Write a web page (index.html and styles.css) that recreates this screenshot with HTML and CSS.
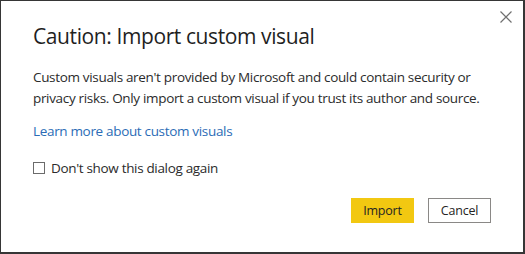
FILE: index.html
```html
<!DOCTYPE html>
<html>
<head>
  <title>Caution: Import custom visual</title>
  <link rel="stylesheet" href="styles.css">
</head>
<body>
  <div class="dialog">
    <button class="close" aria-label="Close">
      <svg width="12" height="12" viewBox="0 0 12 12">
        <path d="M0.5 0.5 L11.5 11.5 M11.5 0.5 L0.5 11.5" stroke="#707070" stroke-width="1.2" fill="none"/>
      </svg>
    </button>
    <h1 class="title">Caution: Import custom visual</h1>
    <p class="message">Custom visuals aren't provided by Microsoft and could contain security or privacy risks. Only import a custom visual if you trust its author and source.</p>
    <a class="link" href="#">Learn more about custom visuals</a>
    <label class="check">
      <span class="box"></span>
      <span>Don't show this dialog again</span>
    </label>
    <div class="actions">
      <button class="btn primary">Import</button>
      <button class="btn secondary">Cancel</button>
    </div>
  </div>
</body>
</html>
```

FILE: styles.css
```css
body {
  margin: 0;
  font-family: "Open Sans", "Noto Sans", sans-serif;
  background-color: #fff;
}

.dialog {
  position: relative;
  box-sizing: border-box;
  width: 525px;
  height: 254px;
  border-style: solid;
  border-color: #363636;
  border-width: 1px 2px 2px 1px;
  padding: 21px 32px 0 32px;
  display: flex;
  flex-direction: column;
  color: #252423;
}

.close {
  position: absolute;
  top: 9px;
  right: 10px;
  width: 14px;
  height: 14px;
  padding: 1px;
  border: none;
  background: none;
  cursor: pointer;
  display: flex;
}

.title {
  margin: 0;
  font-size: 21px;
  font-weight: 400;
  line-height: 28px;
  letter-spacing: -0.4px;
  color: #1f1f1f;
}

.message {
  margin: 17px 0 0 0;
  font-size: 13.5px;
  line-height: 21px;
  color: #2b2b2b;
  letter-spacing: -0.33px;
}

.link {
  margin-top: 12px;
  font-size: 13.5px;
  line-height: 20px;
  color: #2b6cb6;
  text-decoration: none;
  align-self: flex-start;
  letter-spacing: -0.33px;
}

.check {
  margin-top: 17px;
  display: flex;
  align-items: center;
  gap: 6px;
  font-size: 13.5px;
  line-height: 20px;
  color: #2b2b2b;
  letter-spacing: -0.33px;
}

.box {
  box-sizing: border-box;
  width: 12px;
  height: 12px;
  border: 1.5px solid #6b6b6b;
}

.actions {
  margin-top: 20px;
  display: flex;
  justify-content: flex-end;
  gap: 14px;
}

.btn {
  box-sizing: border-box;
  width: 63px;
  height: 25px;
  font-family: inherit;
  font-size: 12.5px;
  color: #252423;
  cursor: pointer;
  letter-spacing: -0.2px;
}

.btn.primary {
  background-color: #f2c811;
  border: 1px solid #f2c811;
}

.btn.secondary {
  background-color: #fff;
  border: 1px solid #8a8886;
}
```
